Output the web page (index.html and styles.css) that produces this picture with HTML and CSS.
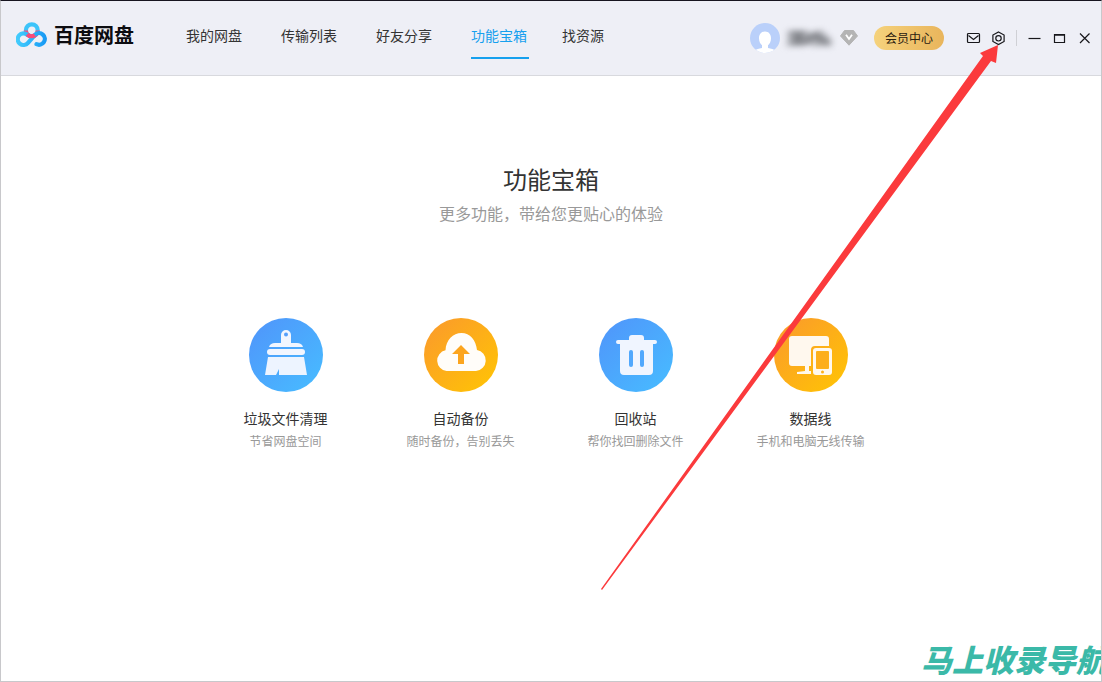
FILE: index.html
```html
<!DOCTYPE html>
<html lang="zh-CN">
<head>
<meta charset="utf-8">
<title>百度网盘</title>
<link rel="stylesheet" href="styles.css">
</head>
<body>
<div class="window">
  <header class="topbar">
    <div class="brand">
      <svg class="brand-logo" viewBox="0 0 32 26" aria-hidden="true">
        <defs>
          <linearGradient id="lg-blue" gradientUnits="userSpaceOnUse" x1="0" x2="32" y1="0" y2="0"><stop offset="0" stop-color="#45cdfc"/><stop offset=".5" stop-color="#2cb4fa"/><stop offset="1" stop-color="#1494f3"/></linearGradient>
        </defs>
        <g fill="none" stroke-width="4.2" stroke-linecap="round">
          <circle cx="15.800" cy="8.200" r="5.900" stroke="#3cc4fa"/>
          <path d="M9.900 8.600a5.900 5.900 0 0 0 11.800 0" stroke="#fb4a79" stroke-linecap="butt"/>
          <path d="M19.200 12.600A5.800 5.800 0 1 1 20.500 22.200M19.200 12.600L12 20.900A5.800 5.800 0 1 1 11.400 12.900" stroke="url(#lg-blue)"/>
          <path d="M11.300 12.400a5.900 5.900 0 0 0 7.600.800" stroke="#fb4a79" stroke-linecap="butt"/>
        </g>
      </svg>
      <span class="brand-name">百度网盘</span>
    </div>
    <nav class="tabs">
      <a class="tab" href="#disk">我的网盘</a>
      <a class="tab" href="#transfer">传输列表</a>
      <a class="tab" href="#share">好友分享</a>
      <a class="tab tab-active" href="#tools" aria-current="page">功能宝箱</a>
      <a class="tab" href="#find">找资源</a>
    </nav>
    <div class="account">
      <svg class="avatar" viewBox="0 0 30 30" aria-hidden="true">
        <defs><clipPath id="av"><circle cx="15" cy="15" r="15"/></clipPath></defs>
        <g clip-path="url(#av)">
          <rect width="30" height="30" fill="#bad0fa"/>
          <path d="M15 8.500c3.800 0 6 2.900 6 6.700 0 3.200-1.300 5.600-3 7v2.800c3 .6 6 1.200 7.500 2.500L23 30H7l-2.500-2.500c1.500-1.300 4.500-1.900 7.500-2.500v-2.800c-1.700-1.400-3-3.800-3-7 0-3.800 2.200-6.700 6-6.700z" fill="#fff"/>
        </g>
      </svg>
      <svg class="masked-name" viewBox="0 0 50 24" aria-hidden="true">
        <path d="M3 5h18l8 2 8-3 11 10v6H30l-6-2-6 2H2l2-7z" fill="#a9abb1"/>
        <path d="M7 7h11l-7 9h14M23 14l9-6 5 7M36 13l8 4" fill="none" stroke="#77797f" stroke-width="4"/>
      </svg>
      <svg class="vip-gem" viewBox="0 0 18 16" aria-hidden="true">
        <path d="M4.500.5h9L17.500 6 9 15.200.5 6z" fill="#b4b4b4" stroke="#b4b4b4" stroke-linejoin="round"/>
        <path d="M6 4.800L9 9l3-4.200" fill="none" stroke="#fff" stroke-width="1.800"/>
      </svg>
      <button class="vip-button" type="button">会员中心</button>
    </div>
    <div class="controls">
      <button class="icon-button" type="button" aria-label="消息">
        <svg viewBox="0 0 15 15"><rect x="1.500" y="2.500" width="12" height="9" rx="1"/><path d="M2.500 4.500l5 4 5-4"/></svg>
      </button>
      <button class="icon-button" type="button" aria-label="设置">
        <svg viewBox="0 0 15 15"><path d="M7.500 1l5.600 3.100v6.400l-5.600 3.100-5.600-3.100V4.100z"/><circle cx="7.500" cy="7.300" r="2.700"/></svg>
      </button>
      <span class="divider"></span>
      <button class="icon-button" type="button" aria-label="最小化">
        <svg viewBox="0 0 15 15"><path d="M1.500 7.500h12"/></svg>
      </button>
      <button class="icon-button" type="button" aria-label="最大化">
        <svg viewBox="0 0 15 15"><path d="M2.500 3.500h10v8h-10zM2 4.200h11"/></svg>
      </button>
      <button class="icon-button" type="button" aria-label="关闭">
        <svg viewBox="0 0 15 15"><path d="M3 2.500l9.500 9.500M12.500 2.500L3 12"/></svg>
      </button>
    </div>
  </header>

  <main class="content">
    <h1 class="title">功能宝箱</h1>
    <p class="subtitle">更多功能，带给您更贴心的体验</p>
    <div class="features">
      <a class="feature" href="#clean">
        <svg class="feature-icon" viewBox="0 0 74 74" aria-hidden="true">
          <defs>
            <linearGradient id="blue" x1="0" y1="0" x2="1" y2="1"><stop offset=".1" stop-color="#4f98fb"/><stop offset=".9" stop-color="#48b9ff"/></linearGradient>
            <linearGradient id="orange" x1="0" y1="0" x2="1" y2="1"><stop offset=".1" stop-color="#fb9d29"/><stop offset=".9" stop-color="#ffc107"/></linearGradient>
          </defs>
          <circle cx="37" cy="37" r="37" fill="url(#blue)"/>
          <path d="M20 29c1-3 3-4 6-4h6V17a5 5 0 0 1 10 0v8h6c3 0 5 1 6 4z" fill="#f2f6ff"/>
          <circle cx="37" cy="16.500" r="2" fill="#559ffb"/>
          <rect x="18" y="31" width="38" height="6" rx="3" fill="#f2f6ff"/>
          <path d="M19 39h36l3 18H30v-6l-3 6H16z" fill="#edf4ff"/>
        </svg>
        <span class="feature-name">垃圾文件清理</span>
        <span class="feature-note">节省网盘空间</span>
      </a>
      <a class="feature" href="#backup">
        <svg class="feature-icon" viewBox="0 0 74 74" aria-hidden="true">
          <circle cx="37" cy="37" r="37" fill="url(#orange)"/>
          <path d="M22.500 53a10.500 10.500 0 0 1-1-20.700C22 22 29 15 37.500 15S52 22 53 32A10.600 10.600 0 0 1 52 53z" fill="#fffdf9"/>
          <path d="M37 27l9 9h-6v10h-6V36h-6z" fill="#fca51e"/>
        </svg>
        <span class="feature-name">自动备份</span>
        <span class="feature-note">随时备份，告别丢失</span>
      </a>
      <a class="feature" href="#trash">
        <svg class="feature-icon" viewBox="0 0 74 74" aria-hidden="true">
          <circle cx="37" cy="37" r="37" fill="url(#blue)"/>
          <path d="M19 22h11v-2q0-3 3-3h9q3 0 3 3v2h11q2 0 2 2t-2 2h-2v27q0 4-4 4H25q-4 0-4-4V26h-2q-2 0-2-2t2-2z" fill="#f0f5ff"/>
          <rect x="30" y="32" width="4" height="17" rx="2" fill="#51a8fd"/>
          <rect x="41" y="32" width="4" height="17" rx="2" fill="#51a8fd"/>
        </svg>
        <span class="feature-name">回收站</span>
        <span class="feature-note">帮你找回删除文件</span>
      </a>
      <a class="feature" href="#cable">
        <svg class="feature-icon" viewBox="0 0 74 74" aria-hidden="true">
          <circle cx="37" cy="37" r="37" fill="url(#orange)"/>
          <path d="M18 18h34q3 0 3 3v7H41q-4 0-4 4v16H18q-3 0-3-3V21q0-3 3-3z" fill="#fff8ee"/>
          <path d="M31 48h4v5h2v3H23v-2l8-1z" fill="#fff8ee"/>
          <rect x="39" y="30" width="19" height="27" rx="3" fill="#fff8ee"/>
          <rect x="42" y="33" width="13" height="18" rx="1" fill="#fdb11b"/>
          <rect x="43.500" y="34.500" width="10" height="15" fill="#fdae1c"/>
          <circle cx="48.500" cy="54" r="1.500" fill="#fdb11b"/>
        </svg>
        <span class="feature-name">数据线</span>
        <span class="feature-note">手机和电脑无线传输</span>
      </a>
    </div>
  </main>
  <svg class="pointer" viewBox="0 0 400 548" aria-hidden="true">
    <path d="M397 1L395 19 390 17 1 546 0 545 382 12 379 9z" fill="#fb3a3c"/>
  </svg>
  <div class="watermark">马上收录导航</div>
</div>
</body>
</html>
```
FILE: styles.css
```css
* {
  box-sizing: border-box;
}

body {
  margin: 0;
  background: #fff;
  color: #333;
  font-family: "Noto Sans CJK SC", sans-serif;
  font-size: 14px;
}

a {
  color: inherit;
  text-decoration: none;
}

.window {
  position: relative;
  min-height: 100vh;
  overflow: hidden;
  border: 1px solid #c8c8cb;
  border-top-color: #17141f;
}

.topbar {
  display: flex;
  align-items: center;
  height: 75px;
  padding: 0 9px 0 15px;
  background: #eeeff6;
  border-bottom: 1px solid #d8d9de;
}

.brand {
  display: flex;
  align-items: center;
  gap: 6px;
  width: 170px;
  padding-bottom: 6px;
}

.brand-logo {
  width: 32px;
  height: 26px;
}

.brand-name {
  color: #0c0c10;
  font-size: 20px;
  font-weight: 700;
  line-height: 28px;
}

.tabs {
  display: flex;
  gap: 39px;
}

.tab {
  padding: 8px 0 12px;
  border-bottom: 2px solid transparent;
  line-height: 20px;
  white-space: nowrap;
}

.tab-active {
  width: 58px;
  margin-right: -6px;
  border-color: #16a0ee;
  color: #16a0ee;
}

.account {
  display: flex;
  align-items: center;
  margin-left: auto;
}

.avatar {
  width: 30px;
  height: 30px;
}

.masked-name {
  width: 50px;
  height: 24px;
  margin: 0 6px 0 4px;
  filter: blur(3px);
}

.vip-gem {
  width: 18px;
  height: 16px;
}

.vip-button {
  width: 70px;
  height: 24px;
  margin-left: 16px;
  padding: 0;
  border: 0;
  border-radius: 12px;
  background: linear-gradient(90deg, #f5d27c, #e9b55c);
  color: #2a2010;
  font: inherit;
  font-size: 12px;
  line-height: 24px;
}

.controls {
  display: flex;
  align-items: center;
  gap: 10px;
  margin-left: 22px;
}

.icon-button {
  display: flex;
  width: 15px;
  height: 15px;
  padding: 0;
  border: 0;
  background: none;
}

.icon-button svg {
  width: 15px;
  height: 15px;
  fill: none;
  stroke: #17171b;
  stroke-width: 1.2;
}

.divider {
  width: 1px;
  height: 16px;
  background: #cfd0d5;
}

.content {
  padding: 85px 0 40px;
  text-align: center;
}

.title {
  margin: 0;
  font-size: 24px;
  font-weight: 400;
  line-height: 36px;
}

.subtitle {
  margin: 4px 0 0;
  color: #999;
  font-size: 16px;
  line-height: 24px;
}

.features {
  display: flex;
  justify-content: center;
  margin-top: 93px;
  padding-right: 6px;
}

.feature {
  display: flex;
  flex-direction: column;
  align-items: center;
  width: 175px;
}

.feature-icon {
  width: 74px;
  height: 74px;
}

.feature-name {
  margin-top: 15px;
  line-height: 22px;
}

.feature-note {
  margin-top: 2px;
  color: #999;
  font-size: 12px;
  line-height: 20px;
}

.pointer {
  position: absolute;
  top: 43px;
  right: 100px;
  width: 400px;
  height: 548px;
  pointer-events: none;
}

.watermark {
  position: absolute;
  bottom: 2px;
  right: -6px;
  color: #3bb9a8;
  font-size: 31px;
  font-style: italic;
  font-weight: 900;
  line-height: 40px;
  white-space: nowrap;
}
```
